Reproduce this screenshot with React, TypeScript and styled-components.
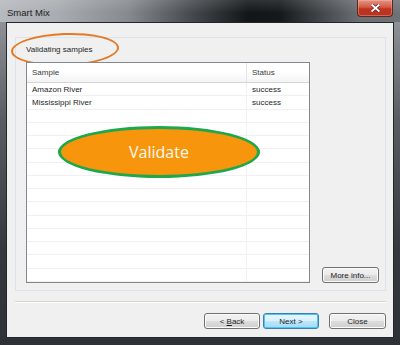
import React from "react";
import styled, { createGlobalStyle } from "styled-components";

const Global = createGlobalStyle`
  html, body { margin: 0; padding: 0; background: #ffffff; }
  body { font-family: "Liberation Sans", Arial, sans-serif; }
`;

const Frame = styled.div`
  width: 400px;
  height: 345px;
  display: flex;
  flex-direction: column;
  background: #3a3e42;
  overflow: hidden;
`;

const TitleBar = styled.div`
  height: 22px;
  flex: none;
  display: flex;
  align-items: flex-start;
  justify-content: space-between;
  background:
    linear-gradient(180deg, rgba(255,255,255,0.12) 0%, rgba(255,255,255,0) 60%),
    linear-gradient(90deg, #b6babe 0%, #a9adb1 14%, #868a8e 32%, #45494d 48%, #121619 62%, #15191c 70%, #4a4e52 82%, #6c7074 90%, #6e7276 100%);
`;

const Title = styled.span`
  font-size: 9.5px;
  color: #1c1c1c;
  margin: 8px 0 0 7px;
  line-height: 10px;
`;

const CloseBtn = styled.div`
  width: 36px;
  height: 17px;
  margin-right: 7px;
  box-sizing: border-box;
  border: 1px solid #5a2a22;
  border-top: none;
  border-radius: 0 0 4px 4px;
  background: linear-gradient(180deg, #e59585 0%, #d25a45 45%, #c0341f 55%, #b83220 100%);
  box-shadow: inset 0 0 0 1px rgba(255, 200, 190, 0.35);
  display: flex;
  align-items: center;
  justify-content: center;
`;

const ClientWrap = styled.div`
  flex: 1;
  display: flex;
  padding: 0 6px 7px 6px;
  background: linear-gradient(180deg, #8e9296 0%, #5a5e62 30%, #35393d 70%, #2e3236 100%);
`;

const Client = styled.div`
  flex: 1;
  display: flex;
  flex-direction: column;
  background: #f0f0f0;
  border: 1px solid #23272a;
  padding: 14px 7px 7px 8px;
`;

const Panel = styled.div`
  position: relative;
  height: 254px;
  box-sizing: border-box;
  border: 1px solid #dde3ea;
  display: flex;
  flex-direction: column;
  padding: 0 5px 7px 10px;
`;

const Heading = styled.div`
  height: 25px;
  display: flex;
  align-items: center;
  font-size: 8px;
  color: #1e1e1e;
  padding-left: 0;
  margin-top: -1px;
`;

const HeadingRing = styled.div`
  position: absolute;
  left: -5px;
  top: -5px;
  width: 108px;
  height: 33px;
  box-sizing: border-box;
  border: 2.5px solid #e57a26;
  border-radius: 50%;
  transform: rotate(-2deg);
`;

const Content = styled.div`
  flex: 1;
  display: flex;
  align-items: flex-end;
  gap: 12px;
`;

const List = styled.div`
  position: relative;
  width: 284px;
  height: 221px;
  box-sizing: border-box;
  border: 1px solid #828790;
  background: #ffffff;
  display: flex;
  flex-direction: column;
  overflow: hidden;
`;

const HeaderRow = styled.div`
  height: 20px;
  flex: none;
  box-sizing: border-box;
  display: grid;
  grid-template-columns: 220px 1fr;
  background: linear-gradient(180deg, #ffffff 0%, #ffffff 45%, #f3f4f6 100%);
  border-bottom: 1px solid #d5d5d5;
`;

const HeaderCell = styled.div<{ $last?: boolean }>`
  display: flex;
  align-items: center;
  padding-left: 5px;
  font-size: 8px;
  color: #3a3a3a;
  border-right: ${(p) => (p.$last ? "none" : "1px solid #e3e5e8")};
`;

const Row = styled.div`
  height: 13.27px;
  flex: none;
  box-sizing: border-box;
  display: grid;
  grid-template-columns: 220px 1fr;
  border-bottom: 1px solid #f0f0f0;
`;

const Cell = styled.div<{ $last?: boolean }>`
  display: flex;
  align-items: center;
  padding-left: 5px;
  font-size: 8px;
  color: #1e1e1e;
  white-space: nowrap;
  border-right: ${(p) => (p.$last ? "none" : "1px solid #f0f0f0")};
`;

const ValidateBubble = styled.div`
  position: absolute;
  left: 31px;
  top: 63px;
  width: 202px;
  height: 52px;
  box-sizing: border-box;
  border: 3px solid #1ea84b;
  border-radius: 50%;
  background: #f7960c;
  display: flex;
  align-items: center;
  justify-content: center;
  font-family: "Open Sans", "Liberation Sans", sans-serif;
  font-size: 16px;
  color: #fff8ee;
  padding-bottom: 1px;
`;

const Btn = styled.button<{ $default?: boolean; $w?: number }>`
  width: ${(p) => p.$w ?? 56}px;
  height: 16px;
  padding: 0;
  box-sizing: border-box;
  font-family: "Liberation Sans", Arial, sans-serif;
  font-size: 8px;
  color: #1e1e1e;
  border-radius: 3px;
  border: 1px solid ${(p) => (p.$default ? "#3c7fb1" : "#707070")};
  background: ${(p) =>
    p.$default
      ? "linear-gradient(180deg, #eaf6fd 0%, #d9f0fc 50%, #bee6fd 51%, #a7d9f5 100%)"
      : "linear-gradient(180deg, #f2f2f2 0%, #ebebeb 50%, #dddddd 51%, #cfcfcf 100%)"};
  box-shadow: inset 0 0 0 1px ${(p) => (p.$default ? "#48c8f5" : "#fcfcfc")};
  flex: none;
`;

const Separator = styled.div`
  height: 0;
  margin-top: 10px;
  border-top: 1px solid #d5d5d5;
  border-bottom: 1px solid #ffffff;
`;

const ButtonBar = styled.div`
  margin-top: 10px;
  display: flex;
  justify-content: flex-end;
  align-items: center;
`;

const Gap = styled.div<{ $w: number }>`
  width: ${(p) => p.$w}px;
  flex: none;
`;

const rows: [string, string][] = [
  ["Amazon River", "success"],
  ["Mississippi River", "success"],
];

export default function App() {
  const all = [...rows];
  while (all.length < 15) all.push(["", ""]);
  return (
    <>
      <Global />
      <Frame>
        <TitleBar>
          <Title>Smart Mix</Title>
          <CloseBtn>
            <svg width="9" height="8" viewBox="0 0 9 8">
              <path d="M1.2 1 L7.8 7 M7.8 1 L1.2 7" stroke="#5a1a10" strokeWidth="3.2" strokeLinecap="square" />
              <path d="M1.2 1 L7.8 7 M7.8 1 L1.2 7" stroke="#ffffff" strokeWidth="1.8" strokeLinecap="square" />
            </svg>
          </CloseBtn>
        </TitleBar>
        <ClientWrap>
          <Client>
            <Panel>
              <Heading>Validating samples</Heading>
              <HeadingRing />
              <Content>
                <List>
                  <HeaderRow>
                    <HeaderCell>Sample</HeaderCell>
                    <HeaderCell $last>Status</HeaderCell>
                  </HeaderRow>
                  {all.map((r, i) => (
                    <Row key={i}>
                      <Cell>{r[0]}</Cell>
                      <Cell $last>{r[1]}</Cell>
                    </Row>
                  ))}
                  <ValidateBubble>Validate</ValidateBubble>
                </List>
                <Btn $w={57}>More info...</Btn>
              </Content>
            </Panel>
            <Separator />
            <ButtonBar>
              <Btn>
                &lt; <u>B</u>ack
              </Btn>
              <Gap $w={3} />
              <Btn $default>Next &gt;</Btn>
              <Gap $w={10} />
              <Btn $w={57}>Close</Btn>
            </ButtonBar>
          </Client>
        </ClientWrap>
      </Frame>
    </>
  );
}
